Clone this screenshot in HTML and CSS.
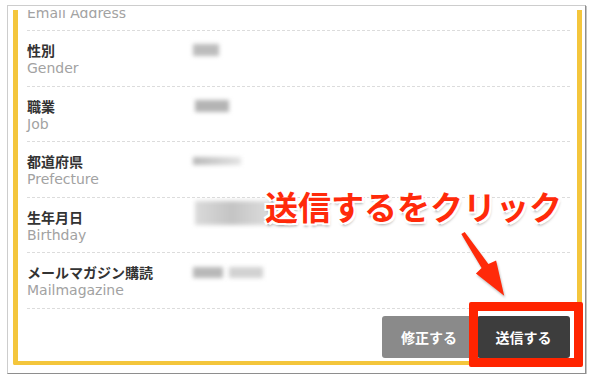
FILE: index.html
```html
<!DOCTYPE html>
<html lang="ja">
<head>
    <meta charset="UTF-8">
    <meta name="viewport" content="width=device-width, initial-scale=1.0">
    <title>確認画面</title>
    <link rel="stylesheet" href="styles.css">
</head>
<body>
    <div class="frame">
        <div class="viewport">
            <div class="card">
                <div class="row first">
                    <div class="label"><b>メールアドレス</b><span>Email Address</span></div>
                    <div class="value"></div>
                </div>
                <div class="row">
                    <div class="label"><b>性別</b><span>Gender</span></div>
                    <div class="value"><i class="blur gender"></i></div>
                </div>
                <div class="row">
                    <div class="label"><b>職業</b><span>Job</span></div>
                    <div class="value"><i class="blur job"></i></div>
                </div>
                <div class="row">
                    <div class="label"><b>都道府県</b><span>Prefecture</span></div>
                    <div class="value"><i class="blur pref"></i></div>
                </div>
                <div class="row">
                    <div class="label"><b>生年月日</b><span>Birthday</span></div>
                    <div class="value"><i class="blur birth"></i></div>
                </div>
                <div class="row">
                    <div class="label"><b>メールマガジン購読</b><span>Mailmagazine</span></div>
                    <div class="value"><i class="blur mail"></i><i class="blur mail2"></i></div>
                </div>
                <div class="actions">
                    <button class="btn btn-back">修正する</button>
                    <button class="btn btn-send">送信する</button>
                </div>
            </div>
        </div>

        <div class="callout">送信するをクリック</div>
        <svg class="arrow" viewBox="455 228 55 72" width="55" height="72">
            <polygon points="461.3,234.1 464.7,231.9 488.4,263.9 496.1,260.6 504.2,295.7 475.9,273.4 481.6,268.1" fill="#ff2a0a"/>
        </svg>
        <div class="highlight"></div>
    </div>
</body>
</html>
```

FILE: styles.css
```css
body {
    margin: 0;
    background-color: #fff;
    font-family: "DejaVu Sans", Verdana, sans-serif;
}
.frame {
    position: relative;
    box-sizing: border-box;
    width: 579px;
    height: 369px;
    margin: 5px 0 0 7px;
    padding: 4px 3px 0 5px;
    background-color: #fff;
    border: 1px solid #cdcdcd;
    border-right-color: #8e8e8e;
    border-bottom-color: #8e8e8e;
    box-shadow: 1px 1px 0 #c4c4c4;
}
.viewport {
    height: 355px;
    overflow: hidden;
}
.card {
    margin-top: -34.5px;
    padding: 0 7px 3.5px 9px;
    border: 5px solid #f4c63c;
    border-top: 0;
    border-radius: 0 0 4px 4px;
}
.row {
    display: grid;
    grid-template-columns: 166px 1fr;
    padding: 10px 0 8.5px;
    border-top: 1px dashed #dcdcdc;
}
.row.first {
    border-top: 0;
}
.label b {
    display: block;
    font-family: "Noto Sans CJK JP", sans-serif;
    font-size: 14px;
    line-height: 18px;
    font-weight: bold;
    color: #333;
}
.label span {
    display: block;
    font-size: 14px;
    line-height: 18px;
    color: #a2a2a2;
}
.value {
    display: flex;
    align-items: flex-start;
}
.blur {
    display: block;
    filter: blur(2px);
    background-color: #bcbcbc;
}
.gender {
    width: 26px;
    height: 12px;
    margin-top: 3px;
}
.job {
    width: 34px;
    height: 12px;
    margin: 3px 0 0 2px;
    background-color: #b4b4b4;
}
.pref {
    width: 48px;
    height: 8px;
    margin-top: 5px;
    background: linear-gradient(90deg, #b8b8b8, #d2d2d2 60%, #e4e4e4);
}
.birth {
    width: 92px;
    height: 24px;
    margin: -7px 0 0 2px;
    background: linear-gradient(90deg, #dadada, #c4c4c4 40%, #d6d6d6 70%, #e2e2e2);
}
.mail {
    width: 30px;
    height: 11px;
    margin-top: 4px;
    background-color: #b8b8b8;
}
.mail2 {
    width: 34px;
    height: 11px;
    margin: 4px 0 0 6px;
    background-color: #d2d2d2;
}
.actions {
    display: flex;
    justify-content: flex-end;
    gap: 1px;
    padding-top: 7px;
    border-top: 1px dashed #dcdcdc;
}
.btn {
    height: 42px;
    border: 0;
    border-radius: 3px;
    font-family: "Noto Sans CJK JP", sans-serif;
    font-size: 14px;
    font-weight: bold;
    color: #fff;
}
.btn-back {
    width: 94px;
    background-color: #8a8a8a;
}
.btn-send {
    width: 93px;
    background-color: #3d3d3d;
}
.callout {
    position: absolute;
    left: 257px;
    top: 184px;
    font-family: "Noto Sans CJK JP", sans-serif;
    font-size: 33px;
    line-height: 1;
    font-weight: bold;
    color: #ff2a0a;
    white-space: nowrap;
    text-shadow:
        1px 0 0 #fff, -1px 0 0 #fff, 0 1px 0 #fff, 0 -1px 0 #fff,
        2px 2px 0 #fff, -2px 2px 0 #fff, 2px -2px 0 #fff, -2px -2px 0 #fff,
        1px 3px 3px rgba(0, 0, 0, 0.35);
}
.arrow {
    position: absolute;
    left: 447px;
    top: 222px;
    filter: drop-shadow(1px 2px 1px rgba(0, 0, 0, 0.25));
}
.highlight {
    position: absolute;
    left: 461px;
    top: 296px;
    box-sizing: border-box;
    width: 114px;
    height: 65px;
    border: 9px solid #ff2400;
    border-radius: 2px;
}
```
